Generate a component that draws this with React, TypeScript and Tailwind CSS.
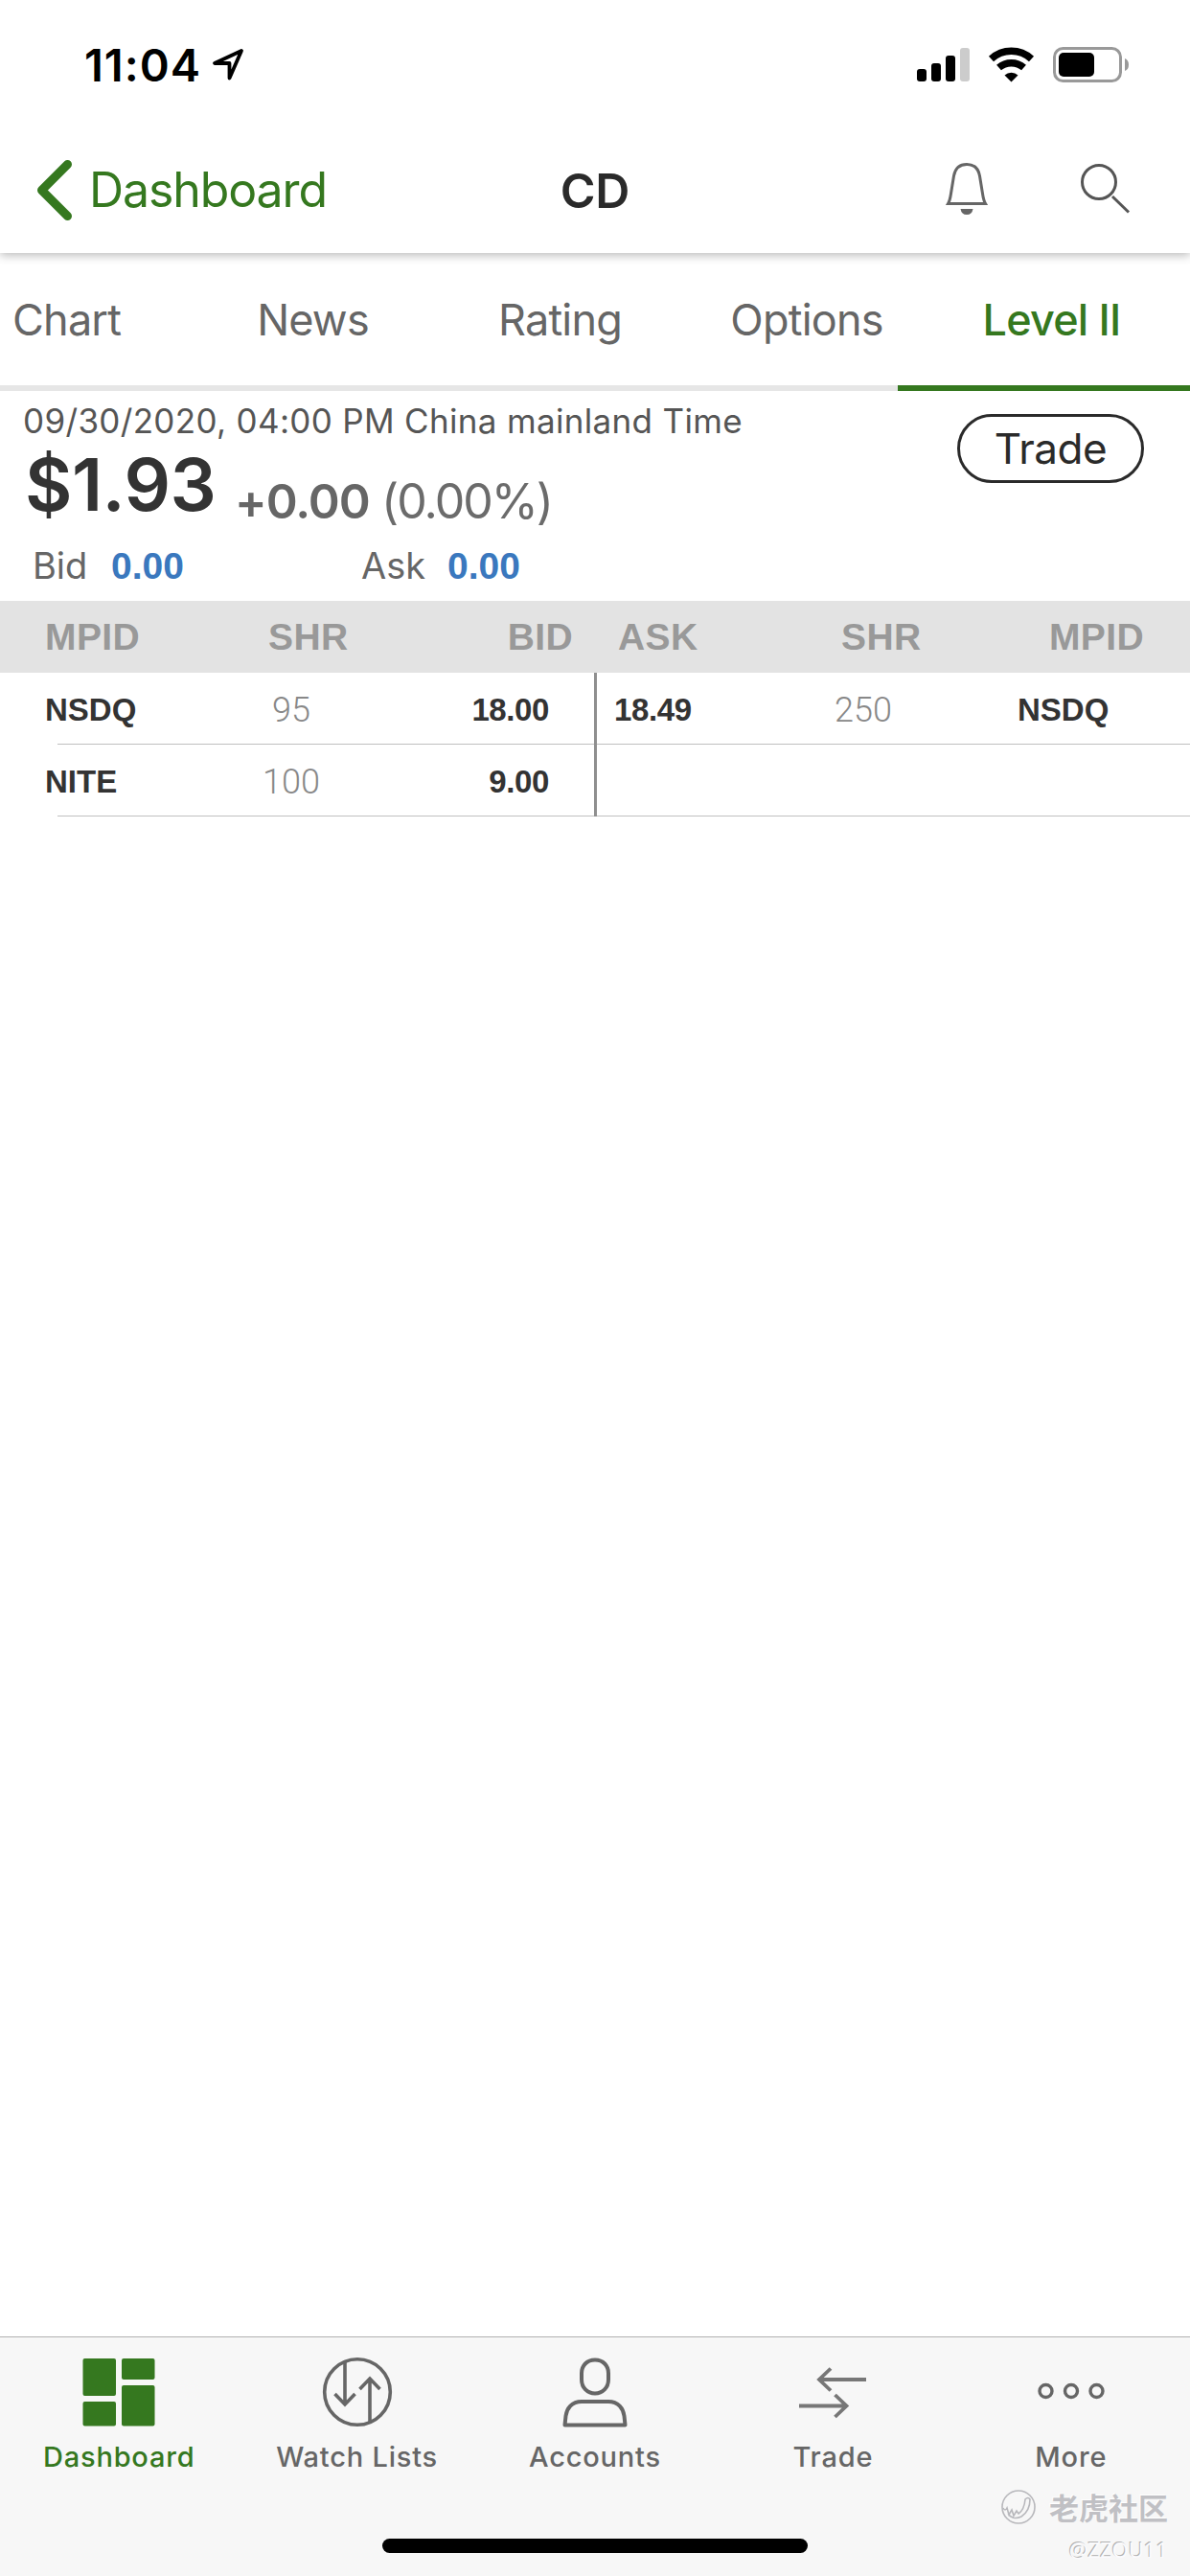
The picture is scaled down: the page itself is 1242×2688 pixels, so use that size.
import React from "react";

const tabs = [
  { label: "Chart", width: "w-[198px] pl-[13px] text-left" },
  { label: "News", width: "w-[257px]" },
  { label: "Rating", width: "w-[259px]" },
  { label: "Options", width: "w-[223px] pl-[33px]" },
];

const bids = [
  { mpid: "NSDQ", shares: "95", price: "18.00" },
  { mpid: "NITE", shares: "100", price: "9.00" },
];

const asks = [
  { mpid: "NSDQ", shares: "250", price: "18.49" },
  { mpid: "", shares: "", price: "" },
];

const DashboardIcon = () => (
  <svg width="76" height="76" viewBox="0 0 76 76" fill="#35781f">
    <rect x="0.5" y="2" width="34.5" height="39" rx="2" />
    <rect x="41" y="2" width="34.5" height="22" rx="2" />
    <rect x="41" y="30" width="34.5" height="42.5" rx="2" />
    <rect x="0.5" y="47" width="34.5" height="25.5" rx="2" />
  </svg>
);

const WatchIcon = () => (
  <svg width="76" height="76" viewBox="0 0 76 76" fill="none" stroke="#666" strokeWidth="3.6">
    <circle cx="38" cy="37" r="34.3" />
    <path d="M25 6v43M14.5 39L25 50l10.5-11M51 68V23M40.5 34L51 23l10.5 11" />
  </svg>
);

const AccountIcon = () => (
  <svg width="76" height="76" viewBox="0 0 76 76" fill="none" stroke="#666" strokeWidth="4" strokeLinejoin="round">
    <path d="M38 3.5c-8.5 0-14 6-14 14v6.5c0 8.5 6 14.500 14 14.5s14-6 14-14.5v-6.5c0-8-5.5-14-14-14z" />
    <path d="M24 47h28c10.5 0 15.5 7.5 16.5 15l1 9.5h-63l1-9.5c1-7.5 6-15 16.5-15z" />
  </svg>
);

const TradeIcon = () => (
  <svg width="76" height="76" viewBox="0 0 76 76" fill="none" stroke="#777" strokeWidth="3.8">
    <path d="M73 24H23M36 12.5L24 24l12 11.5M3 51.5h50M40.5 40l12 11.5-12 11.5" />
  </svg>
);

const MoreIcon = () => (
  <svg width="76" height="76" viewBox="0 0 76 76" fill="none" stroke="#666" strokeWidth="3.4">
    <circle cx="11.5" cy="36" r="6.5" />
    <circle cx="38" cy="36" r="6.5" />
    <circle cx="64.5" cy="36" r="6.5" />
  </svg>
);

const navItems = [
  { label: "Dashboard", icon: <DashboardIcon />, active: true },
  { label: "Watch Lists", icon: <WatchIcon />, active: false },
  { label: "Accounts", icon: <AccountIcon />, active: false },
  { label: "Trade", icon: <TradeIcon />, active: false },
  { label: "More", icon: <MoreIcon />, active: false },
];

const StatusBar: React.FC = () => (
  <div className="flex h-[132px] items-start justify-between pt-[40px] pl-[88px] pr-[61px] text-black">
    <div className="flex items-start">
      <span className="w-[132px] text-[47px] leading-[56px] font-semibold tracking-[1px]">11:04</span>
      <svg className="mt-[9px]" width="38" height="38" viewBox="0 0 38 38" fill="none" stroke="#000" strokeWidth="3.8" strokeLinejoin="round">
        <path d="M32 4L4 17h15.5V32.5z" />
      </svg>
    </div>
    <div className="flex items-start pt-[8px]">
      <svg width="56" height="38" viewBox="0 0 56 38">
        <rect x="0" y="24" width="10" height="13" rx="3" />
        <rect x="15" y="18" width="10" height="19" rx="3" />
        <rect x="30" y="10" width="10" height="27" rx="3" />
        <rect x="45" y="2" width="10" height="35" rx="3" fill="#ccc" />
      </svg>
      <svg className="ml-[18px]" width="50" height="38" viewBox="0 0 50 38" fill="none" stroke="#000" strokeWidth="7.5">
        <path d="M3.5 13.5a31 31 0 0 1 42 0" />
        <path d="M11.5 22.5a20 20 0 0 1 26 0" />
        <path d="M17.5 30.5a10.5 10.5 0 0 1 14 0L24.5 37.5z" fill="#000" stroke="none" />
      </svg>
      <svg className="ml-[18px]" width="82" height="40" viewBox="0 0 82 40">
        <rect x="1.5" y="2.5" width="69" height="34" rx="9" fill="none" stroke="#999" strokeWidth="3" />
        <rect x="6" y="7" width="37" height="25" rx="5" />
        <path d="M75 13q4 1.5 4 6.5t-4 6.5z" fill="#999" />
      </svg>
    </div>
  </div>
);

const Header: React.FC = () => (
  <div className="grid h-[132px] grid-cols-3 items-start">
    <div className="flex items-start pt-[33px] pl-[36px] text-[#35781f]">
      <svg width="42" height="68" viewBox="0 0 42 68" fill="none" stroke="#35781f" strokeWidth="9" strokeLinecap="round" strokeLinejoin="round">
        <path d="M34.5 6.5L7.5 33.5l27 27" />
      </svg>
      <span className="pl-[15px] text-[50px] leading-[67px] tracking-[-1.1px]">Dashboard</span>
    </div>
    <div className="pt-[35px] text-center text-[50px] leading-[65px] font-semibold tracking-[-0.3px] text-[#2a2a2a]">CD</div>
    <div className="flex justify-end pt-[36px] pr-[60px]">
      <svg width="48" height="60" viewBox="0 0 48 60" fill="none" stroke="#666" strokeWidth="3">
        <path d="M4.5 44.5Q6.5 41 7.5 34l3-18.5C12 7.5 17 3.5 24 3.5s12 4 13.5 12l3 18.5q1 7 3 10.5z" />
        <path d="M17.5 50h13q-1 6-6.5 6t-6.5-6z" fill="#666" stroke="none" />
      </svg>
      <svg className="ml-[93px]" width="56" height="60" viewBox="0 0 56 60" fill="none" stroke="#555" strokeWidth="3">
        <circle cx="21" cy="22" r="17.5" />
        <path d="M35 37l17 16.5" />
      </svg>
    </div>
  </div>
);

const Quote: React.FC = () => (
  <section className="flex h-[219px] items-start justify-between">
    <div>
      <div className="pt-[11px] pl-[24px] text-[35px] leading-[40px] tracking-[0.33px] text-[#555]">
        09/30/2020, 04:00 PM China mainland Time
      </div>
      <div className="flex h-[105px] items-baseline pt-[2px] pl-[26px]">
        <span className="w-[219px] text-[76px] leading-[88px] font-semibold tracking-[-0.5px] text-[#333]">$1.93</span>
        <span className="relative top-[8px] w-[153px] text-[50px] font-semibold tracking-[-1px] text-[#666]">+0.00</span>
        <span className="relative top-[8px] text-[50px] tracking-[-2px] text-[#6b6b6b]">(0.00%)</span>
      </div>
      <div className="flex items-baseline pl-[34px] text-[38px] leading-[52px] text-[#666]">
        <span className="w-[82px]">Bid</span>
        <span className="w-[261px] font-['Liberation_Sans',Arial,sans-serif] text-[39px] font-bold text-[#3a78be]">0.00</span>
        <span className="w-[90px]">Ask</span>
        <span className="font-['Liberation_Sans',Arial,sans-serif] text-[39px] font-bold text-[#3a78be]">0.00</span>
      </div>
    </div>
    <button className="mt-[24px] mr-[48px] h-[72px] w-[195px] rounded-full border-[3px] border-[#2a2a2a] text-center text-[44px] leading-[66px] tracking-[-0.5px] text-[#2a2a2a]">
      Trade
    </button>
  </section>
);

const Book: React.FC = () => (
  <section className="font-['Liberation_Sans',Arial,sans-serif]">
    <div className="flex h-[75px] items-center bg-[#e3e3e3] text-[39px] leading-[77px] font-bold tracking-[0.4px] text-[#999]">
      <span className="w-[232px] pl-[47px]">MPID</span>
      <span className="w-[180px] pl-[48px]">SHR</span>
      <span className="w-[186px] text-right">BID</span>
      <span className="w-[232px] pl-[47px]">ASK</span>
      <span className="w-[182px] pl-[48px]">SHR</span>
      <span className="w-[182px] text-right">MPID</span>
    </div>
    <div className="flex">
      <div className="w-[620px]">
        {bids.map((row) => (
          <div key={row.mpid}>
            <div className="flex h-[74px] items-center pt-[3px] text-[33px] font-bold text-[#333]">
              <span className="w-[200px] pl-[47px]">{row.mpid}</span>
              <span className="w-[208px] text-center font-['Roboto',sans-serif] text-[36px] font-light text-[#888]">
                {row.shares}
              </span>
              <span className="w-[165px] text-right tracking-[-0.4px]">{row.price}</span>
            </div>
            <div className="ml-[60px] h-px bg-[#c0c0c0]" />
          </div>
        ))}
      </div>
      <div className="w-[3px] bg-[#8f8f8f]" />
      <div className="w-[619px]">
        {asks.map((row, i) => (
          <div key={i}>
            <div className="flex h-[74px] items-center pt-[3px] text-[33px] font-bold text-[#333]">
              <span className="w-[174px] pl-[18px] tracking-[-0.4px]">{row.price}</span>
              <span className="w-[208px] text-center font-['Roboto',sans-serif] text-[36px] font-light text-[#888]">
                {row.shares}
              </span>
              <span className="pl-[57px]">{row.mpid}</span>
            </div>
            <div className="h-px bg-[#c0c0c0]" />
          </div>
        ))}
      </div>
    </div>
  </section>
);

const BottomNav: React.FC = () => (
  <nav className="relative h-[250px] border-t border-[#b0b0b0] bg-[#f7f7f7]">
    <div className="grid grid-cols-5 pt-[20px]">
      {navItems.map((item) => (
        <div key={item.label} className="flex flex-col items-center">
          {item.icon}
          <span
            className={`pt-[11px] text-[29px] leading-[36px] font-medium tracking-[0.8px] whitespace-nowrap ${
              item.active ? "text-[#35781f]" : "text-[#666]"
            }`}
          >
            {item.label}
          </span>
        </div>
      ))}
    </div>
    {/* Home indicator */}
    <div className="absolute top-[210px] left-[399px] h-[15px] w-[444px] rounded-full bg-black" />
    {/* Community watermark */}
    <div className="absolute top-[154px] right-[23px] flex flex-col items-end">
      <div className="flex items-center">
        <svg className="mr-[13px]" width="38" height="38" viewBox="0 0 38 38" fill="none" stroke="#b8b8bc" strokeWidth="1.6">
          <circle cx="19" cy="19" r="17" />
          <path d="M3 20q2 4 4 0l2 7 3-5 2 6 3-5 2 3q6-4 7-15 3-3 5 0 0 12-9 18-9 4-14-3" />
        </svg>
        <span className="font-['Noto_Sans_CJK_SC',sans-serif] text-[31px] leading-[45px] font-bold text-[#c0c0c4] [text-shadow:-1px_-1px_0_#fff]">
          老虎社区
        </span>
      </div>
      <span className="pt-[5px] font-['Noto_Sans',sans-serif] text-[22px] leading-[34px] text-[#fbfbfd] [text-shadow:-1px_-1px_0_#b0b0b0]">
        @ZZOU11
      </span>
    </div>
  </nav>
);

const App: React.FC = () => {
  return (
    <div className="flex h-[2688px] w-[1242px] flex-col overflow-hidden bg-white font-['Inter',sans-serif]">
      <header className="relative z-10 h-[264px] bg-white shadow-[0_3px_9px_rgba(0,0,0,0.25)]">
        <StatusBar />
        <Header />
      </header>
      <div className="flex h-[144px] text-center text-[45px] leading-[139px] tracking-[-0.8px] text-[#666]">
        {tabs.map((tab) => (
          <div key={tab.label} className={`${tab.width} border-b-[6px] border-[#e6e6e6]`}>
            {tab.label}
          </div>
        ))}
        <div className="w-[305px] border-b-[6px] border-[#35781f] pl-[16px] font-medium text-[#35781f]">Level II</div>
      </div>
      <Quote />
      <Book />
      <div className="flex-1" />
      <BottomNav />
    </div>
  );
};

export default App;
